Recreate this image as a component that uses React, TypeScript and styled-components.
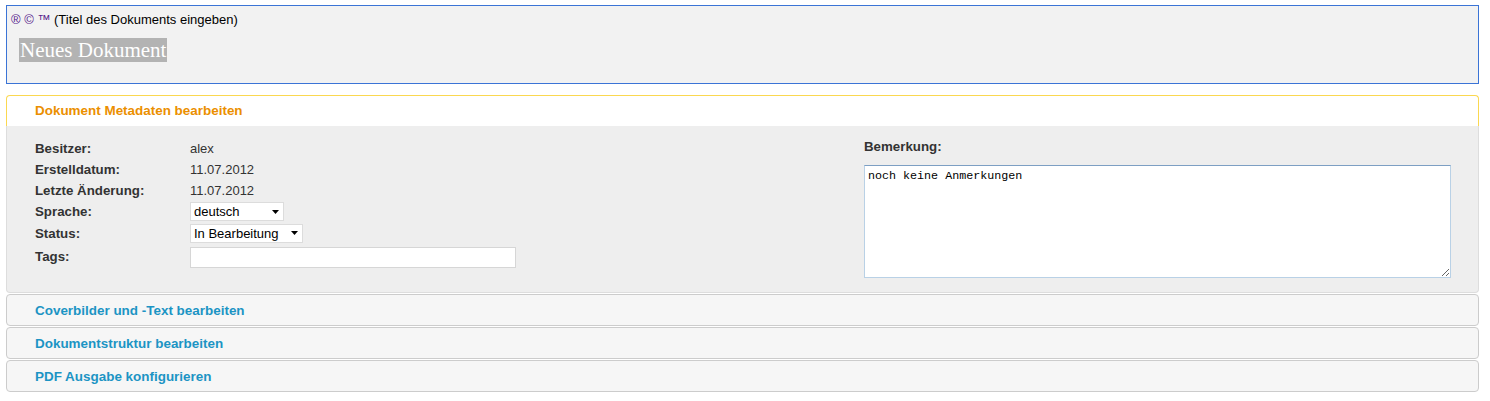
import React from 'react';
import styled, { createGlobalStyle } from 'styled-components';

const GlobalStyle = createGlobalStyle`
  body {
    margin: 0;
    background: #ffffff;
    font-family: "Liberation Sans", Arial, sans-serif;
  }
`;

const Page = styled.div`
  padding: 5px 11px 0 6px;
`;

const TitleBox = styled.div`
  height: 79px;
  box-sizing: border-box;
  border: 1px solid #3b74d6;
  background: #f2f2f2;
  padding: 6px 4px 0 4px;
`;

const TitleHint = styled.div`
  font-size: 13px;
  line-height: 15px;
  color: #000;
`;

const Symbols = styled.span`
  color: #551a8b;
`;

const TitleField = styled.span`
  display: inline-block;
  margin: 11px 0 0 8px;
  padding: 0 1px;
  background: #b3b3b3;
  color: #ffffff;
  font-family: "Liberation Serif", "Times New Roman", serif;
  font-size: 21px;
  line-height: 24px;
`;

const Accordion = styled.div`
  margin-top: 11px;
  display: flex;
  flex-direction: column;
  gap: 1px;
`;

const Header = styled.div<{ $active?: boolean }>`
  height: ${(p) => (p.$active ? 31 : 32)}px;
  box-sizing: border-box;
  display: flex;
  align-items: center;
  padding-left: 28px;
  padding-bottom: ${(p) => (p.$active ? 1 : 0)}px;
  border: 1px solid ${(p) => (p.$active ? '#fbd850' : '#cccccc')};
  border-bottom-width: ${(p) => (p.$active ? 0 : 1)}px;
  border-radius: ${(p) => (p.$active ? '4px 4px 0 0' : '4px')};
  background: ${(p) => (p.$active ? '#ffffff' : '#f6f6f6')};
  color: ${(p) => (p.$active ? '#eb8f00' : '#1c94c4')};
  font-size: 13.45px;
  font-weight: bold;
`;

const Content = styled.div`
  height: 167px;
  box-sizing: border-box;
  border: 1px solid #dddddd;
  border-top: 0;
  border-radius: 0 0 4px 4px;
  background: #eeeeee;
  color: #333333;
  padding: 12px 28px 0 28px;
  display: grid;
  grid-template-columns: 829px 1fr;
`;

const Fields = styled.div`
  display: grid;
  grid-template-columns: 155px 1fr;
  grid-template-rows: 21px 21px 21px 21px 22px 24px;
  align-items: center;
  font-size: 13px;
`;

const Label = styled.div<{ $top?: boolean }>`
  font-weight: bold;
  font-size: 13.3px;
  color: #333333;
  align-self: ${(p) => (p.$top ? 'start' : 'center')};
  padding-top: ${(p) => (p.$top ? 5 : 0)}px;
`;

const Value = styled.div`
  color: #333333;
`;

const SelectBox = styled.div<{ $width: number }>`
  width: ${(p) => p.$width}px;
  height: 19px;
  box-sizing: border-box;
  display: flex;
  align-items: center;
  justify-content: space-between;
  padding: 0 4px 0 3px;
  background: #ffffff;
  border: 1px solid #dcdcdc;
  font-size: 13px;
  color: #000;
`;

const TagsInput = styled.input`
  width: 326px;
  height: 21px;
  box-sizing: border-box;
  margin: 2px 0 0 0;
  border: 1px solid #d6d6d6;
  background: #ffffff;
  outline: none;
`;

const Notes = styled.div`
  display: flex;
  flex-direction: column;
`;

const NotesLabel = styled.div`
  font-size: 13.3px;
  font-weight: bold;
  color: #333333;
  line-height: 15px;
  margin-top: 1px;
`;

const NotesArea = styled.textarea`
  margin-top: 11px;
  width: 587px;
  height: 113px;
  box-sizing: border-box;
  padding: 3px;
  border: 1px solid #b9d1e6;
  border-top-color: #7d9fc3;
  background: #ffffff;
  font-family: "Liberation Mono", "Courier New", monospace;
  font-size: 11.7px;
  color: #000;
  outline: none;
`;

function Caret() {
  return (
    <svg width="7" height="4" viewBox="0 0 7 4">
      <path d="M0 0h7L3.5 4z" fill="#000" />
    </svg>
  );
}

const sections = ['Coverbilder und -Text bearbeiten', 'Dokumentstruktur bearbeiten', 'PDF Ausgabe konfigurieren'];

export default function App() {
  return (
    <Page>
      <GlobalStyle />
      <TitleBox>
        <TitleHint>
          <Symbols>® © ™</Symbols> (Titel des Dokuments eingeben)
        </TitleHint>
        <TitleField>Neues Dokument</TitleField>
      </TitleBox>
      <Accordion>
        <div>
          <Header $active>Dokument Metadaten bearbeiten</Header>
          <Content>
            <Fields>
              <Label>Besitzer:</Label>
              <Value>alex</Value>
              <Label>Erstelldatum:</Label>
              <Value>11.07.2012</Value>
              <Label>Letzte Änderung:</Label>
              <Value>11.07.2012</Value>
              <Label>Sprache:</Label>
              <SelectBox $width={94}>
                deutsch
                <Caret />
              </SelectBox>
              <Label>Status:</Label>
              <SelectBox $width={113}>
                In Bearbeitung
                <Caret />
              </SelectBox>
              <Label $top>Tags:</Label>
              <TagsInput />
            </Fields>
            <Notes>
              <NotesLabel>Bemerkung:</NotesLabel>
              <NotesArea defaultValue="noch keine Anmerkungen" />
            </Notes>
          </Content>
        </div>
        {sections.map((title) => (
          <Header key={title}>{title}</Header>
        ))}
      </Accordion>
    </Page>
  );
}
